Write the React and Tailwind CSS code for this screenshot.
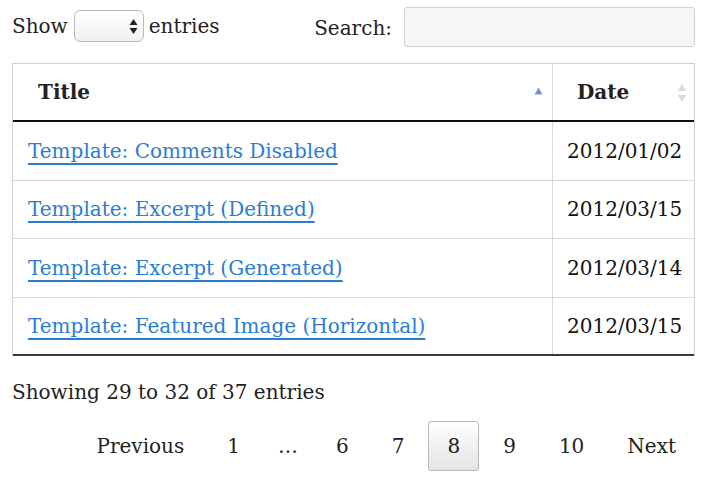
import React from "react";

const rows = [
  ["Template: Comments Disabled", "2012/01/02"],
  ["Template: Excerpt (Defined)", "2012/03/15"],
  ["Template: Excerpt (Generated)", "2012/03/14"],
  ["Template: Featured Image (Horizontal)", "2012/03/15"],
];

function Btn({ children, current, cls = "px-[18px]" }) {
  return (
    <span
      className={
        "flex h-[50px] items-center justify-center rounded-[3px] border " +
        cls +
        " " +
        (current
          ? "border-[#b8b8b8] bg-gradient-to-b from-white to-[#e4e4e4]"
          : "border-transparent")
      }
    >
      {children}
    </span>
  );
}

export default function App() {
  return (
    <div
      className="w-[710px] h-[482px] bg-white text-[20px] text-[#222]"
      style={{ fontFamily: '"DejaVu Serif", "Liberation Serif", serif' }}
    >
      <div className="ml-[12px] w-[683px]">
        <div className="flex h-[55px] items-start justify-between">
          <div className="mt-[10px] flex items-center gap-[5px]">
            <span className="leading-[30px]">Show</span>
            <span className="relative ml-[1px] h-[32px] w-[70px] rounded-[6px] border border-[#b9b9b9] bg-gradient-to-b from-white to-[#f0f0f0]">
              <svg className="absolute right-[5px] top-[7px]" width="9" height="17" viewBox="0 0 9 17">
                <path d="M4.5 1 L8.5 7 L0.5 7 Z" fill="#222" />
                <path d="M4.5 16 L8.5 10 L0.5 10 Z" fill="#222" />
              </svg>
            </span>
            <span className="leading-[30px]">entries</span>
          </div>
          <div className="mt-[7px] flex items-center gap-[12px]">
            <span className="mt-[1px]">Search:</span>
            <span className="block h-[40px] w-[291px] rounded-[3px] border border-[#cfcfcf] bg-[#f6f6f6]"></span>
          </div>
        </div>
        <div className="h-[8px]"></div>
        <div className="border-x border-t border-[#d0d0d0]">
          <div className="flex h-[58px] border-b-2 border-[#111]">
            <div className="relative flex w-[540px] items-center border-r border-[#d8d8d8] pl-[25px] font-bold">
              Title
              <svg className="absolute right-[9px] top-[23px]" width="9" height="8" viewBox="0 0 9 8">
                <path d="M4.5 0.5 L8.5 7.5 L0.5 7.5 Z" fill="#7f8fd0" />
              </svg>
            </div>
            <div className="relative flex flex-1 items-center pl-[24px] font-bold">
              Date
              <svg className="absolute right-[7px] top-[19px]" width="10" height="20" viewBox="0 0 10 20">
                <path d="M5 1 L9 8 L1 8 Z" fill="#d9d9d9" />
                <path d="M5 19 L9 12 L1 12 Z" fill="#d9d9d9" />
              </svg>
            </div>
          </div>
          {rows.map(([t, d], i) => (
            <div
              key={i}
              className={
                "flex h-[58.5px] " +
                (i < rows.length - 1 ? "border-b border-[#d8d8d8]" : "border-b-2 border-[#3a3a3a]")
              }
            >
              <div className="flex w-[540px] items-center border-r border-[#d8d8d8] pl-[15px]">
                <a href="#" className="text-[#2a7dd1] underline decoration-[1.5px] underline-offset-[5px]">
                  {t}
                </a>
              </div>
              <div className="flex flex-1 items-center pl-[14px] text-[#111]">{d}</div>
            </div>
          ))}
        </div>
        <div className="mt-[22px] leading-[28px]">Showing 29 to 32 of 37 entries</div>
        <div className="mt-[15px] flex justify-end gap-[5px] text-[#222]">
          <Btn>Previous</Btn>
          <Btn>1</Btn>
          <span className="flex h-[50px] items-center px-[14px]">…</span>
          <Btn>6</Btn>
          <Btn>7</Btn>
          <Btn current>8</Btn>
          <Btn>9</Btn>
          <Btn>10</Btn>
          <Btn>Next</Btn>
        </div>
      </div>
    </div>
  );
}
